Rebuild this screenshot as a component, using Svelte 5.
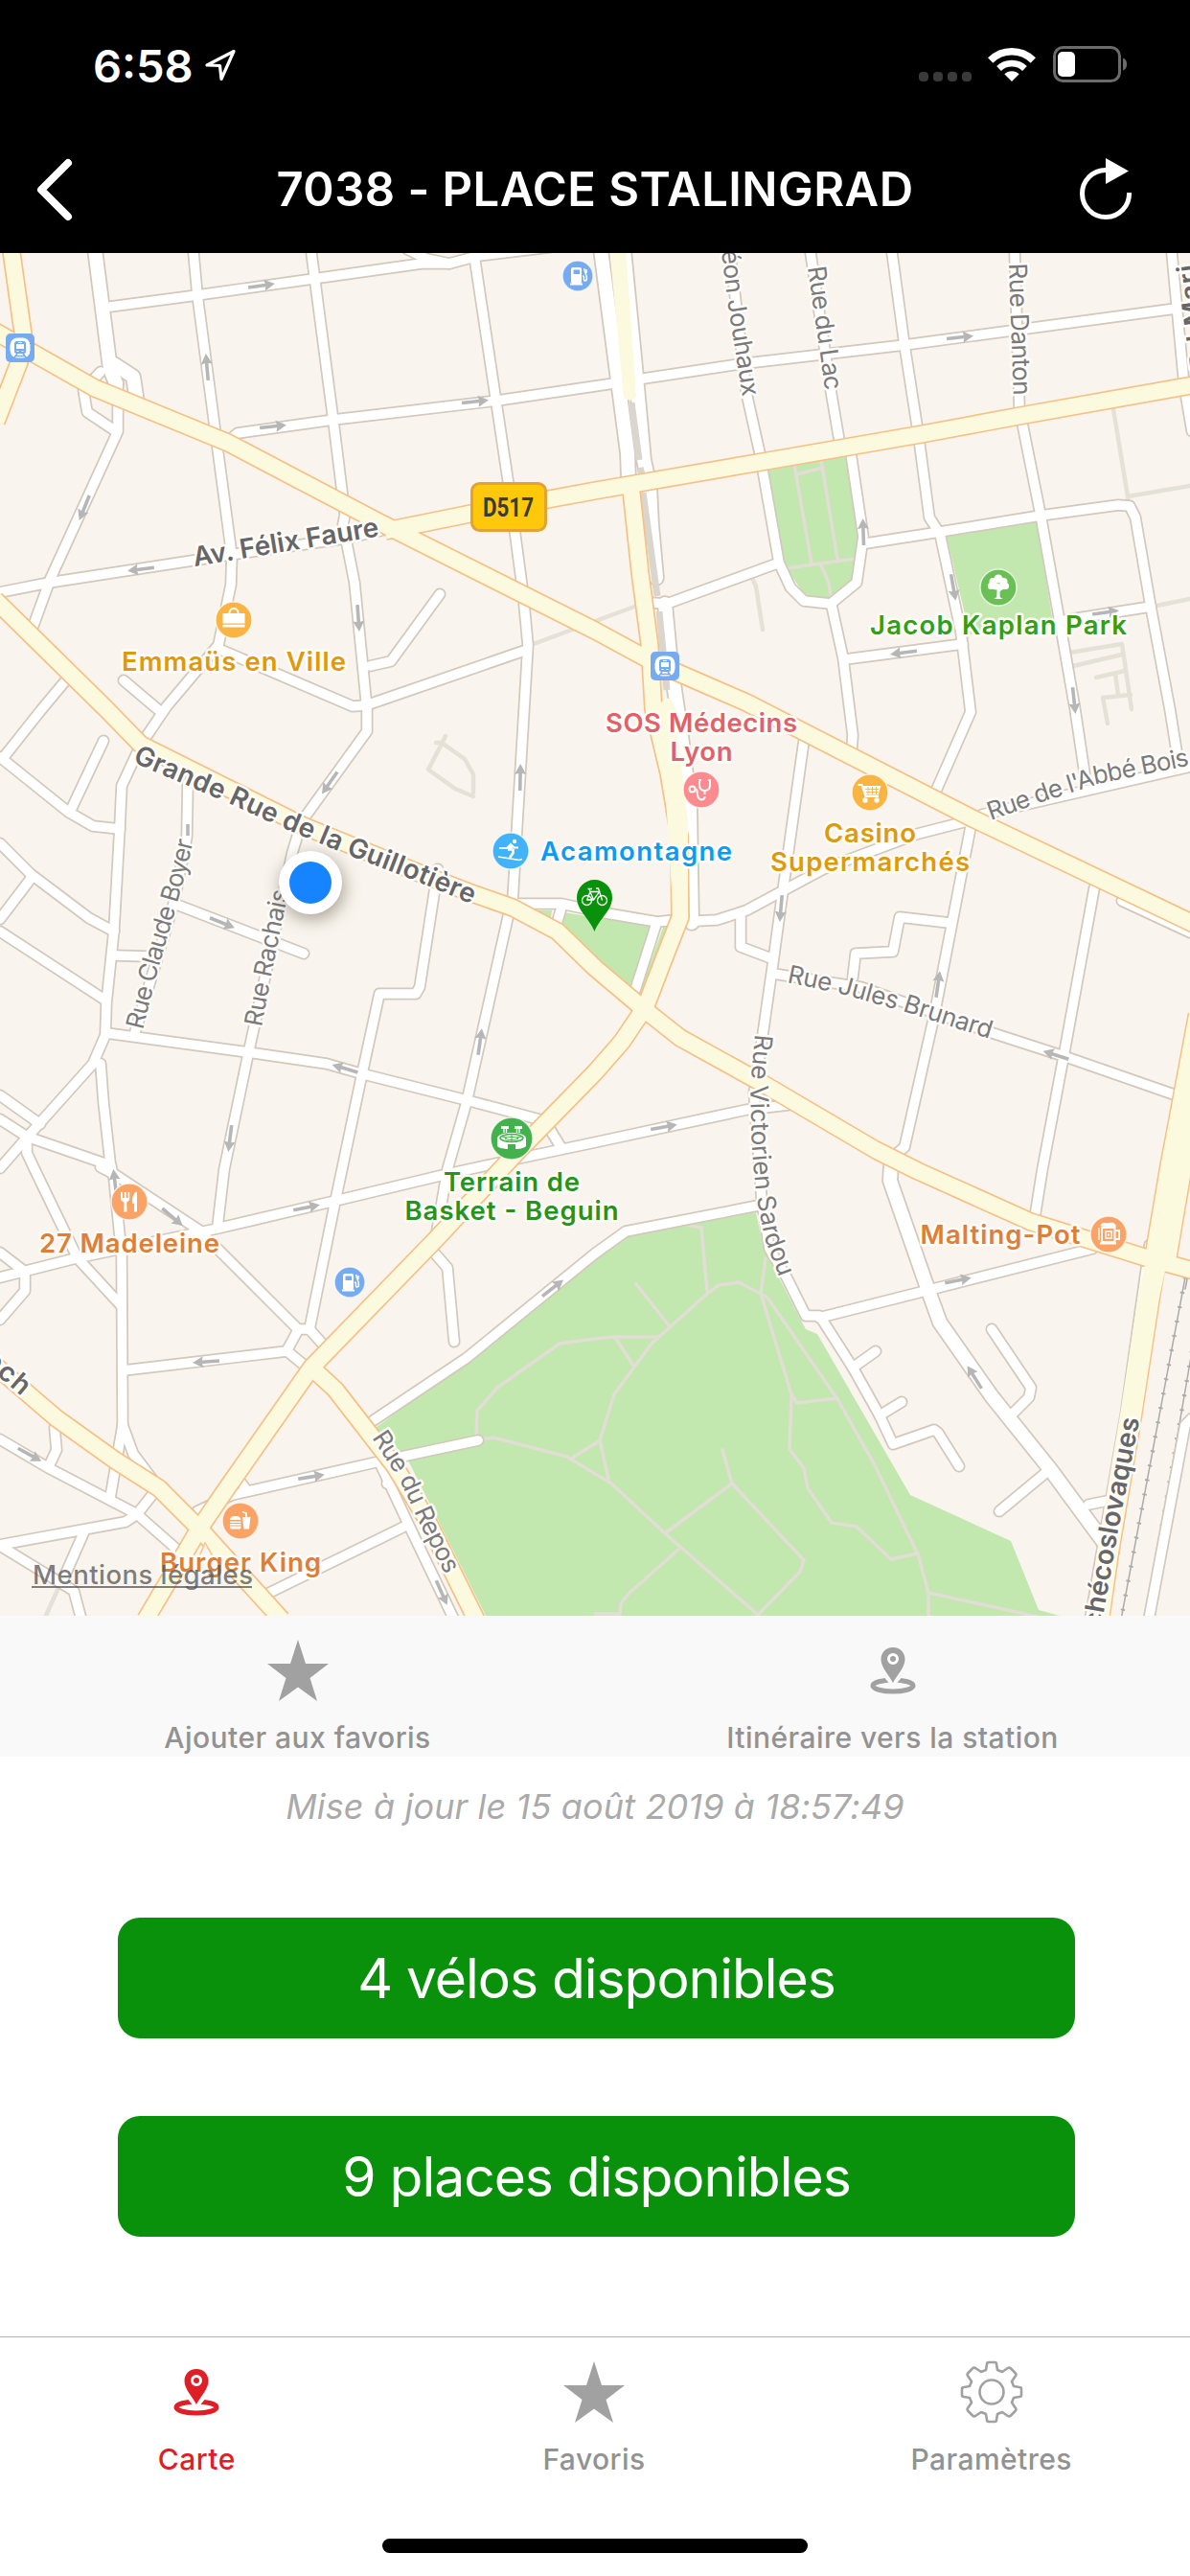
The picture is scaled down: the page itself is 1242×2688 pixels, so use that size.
<script>
  // Map geometry, in page pixels (the viewBox starts below the header).
  const parks = [
    '801,488 884,475 897,560 892,605 865,625 839,620 817,587',
    '988,560 1082,545 1099,650 1012,662',
    '588,952 680,967 657,1030 621,998 584,970',
    '556,950 576,950 574,965',
    '700,967 692,968 667,1037 672,1042',
    '392,1490 577,1350 653,1290 789,1265 797,1303 841,1387 853,1392 950,1560 1055,1608 1084,1680 1106,1686 507,1686 424,1520'
  ];

  const parkPaths = [
    '829,485 847,588', '857,480 874,583', '831,495 859,488', '821,593 892,583', '857,590 865,608 867,623',
    '497,1500 498,1472 519,1448 584,1402 621,1397 641,1395 686,1395',
    '501,1502 515,1500 592,1520 621,1538 637,1547 694,1600 791,1685 835,1640 839,1628 764,1548 754,1513',
    '764,1548 694,1600',
    '708,1617 657,1662 648,1673 647,1684 621,1684',
    '596,1522 626,1503 641,1455 680,1402 738,1350 750,1341 771,1338 794,1350 801,1354 874,1460 912,1527 958,1622 969,1662 969,1690',
    '635,1543 626,1503', '969,1662 1088,1688',
    '794,1350 826,1455 824,1512 839,1532 843,1553 868,1589 894,1593 930,1627 958,1621',
    '826,1455 832,1464 874,1459', '794,1350 799,1313', '738,1347 732,1281 716,1278',
    '698,1383 664,1340', '661,1425 643,1397'
  ];

  const footways = [
    '1162,427 1177,518 1242,507', '1177,518 1177,524', '1207,632 1242,625', '785,603 789,612 796,657',
    '554,673 665,632', '1116,681 1171,672 1181,740', '1120,695 1171,683', '1144,707 1174,700', '1164,703 1167,725',
    '1156,755 1151,728 1180,725', '465,768 459,780 447,803 475,823 494,831',
    '455,775 461,775 485,792 494,808 494,827', '61,1657 46,1690', '1000,672 1009,665'
  ];

  const minor = [
    '115,320 206,308 440,275 469,275 499,267 574,258', '425,260 445,270 469,275',
    '123,400 123,450 53,603 34,655', '105,388 87,407 91,430 121,450',
    '202,264 206,308 226,460 242,580 241,610 228,673 174,737 172,740 147,777 127,820 125,863 119,970 111,1047 110,1080 97,1110 28,1187 0,1219',
    '325,264 348,440 360,537 358,547 370,608 383,740 383,763 315,857 305,890 259,1100 234,1220 227,1280',
    '236,462 248,452 348,438 519,418 641,400', '665,396 771,380 944,360 1227,322',
    '495,267 531,507 546,620 551,673 547,740 535,940 531,953 487,1150 467,1220 455,1290',
    '0,618 51,608 246,578 360,562 405,552',
    '228,677 368,737 382,736 550,678', '459,620 408,690 386,695', '129,710 168,743',
    '67,712 42,742 4,790', '0,790 71,847 97,862 125,865', '108,773 75,843',
    '0,880 32,912 93,958 119,972', '32,917 0,959', '0,972 109,1043', '121,997 154,998',
    '196,817 195,873 182,940 141,1077', '182,943 317,995',
    '111,1078 259,1098 341,1110 376,1120 487,1148 570,1170',
    '457,907 438,1030 434,1037 396,1037 378,1120 357,1220 350,1253 323,1387',
    '0,1143 42,1173', '0,1168 28,1186 115,1216', '28,1190 28,1203 36,1220 81,1313 127,1363',
    '105,1110 108,1150 115,1213 119,1230 127,1310 128,1487 115,1563', '128,1487 139,1517 160,1545',
    '105,1218 119,1225 207,1283 311,1387 323,1387 338,1404',
    '0,1333 79,1313 222,1283 350,1253 467,1225 550,1207 621,1192 779,1158 823,1153', '570,1172 586,1198',
    '0,1307 26,1327 26,1347 0,1377', '129,1430 299,1410 311,1388', '301,1411 318,1425',
    '57,1490 59,1513 51,1530', '0,1502 51,1532 143,1580 194,1625',
    '0,1612 131,1588 143,1580 162,1556', '88,1598 65,1650', '0,1613 77,1660 85,1690',
    '206,1577 242,1560 396,1525 499,1503', '250,1545 258,1556',
    '390,1482 487,1417 621,1308 653,1285 791,1258', '398,1530 426,1590 473,1688', '424,1592 277,1664',
    '410,1530 404,1548', '453,1307 467,1323 474,1400',
    '762,264 779,410 793,473 813,587 825,613 839,627 867,630 894,608 901,560 888,473',
    '846,264 867,407 876,460', '931,264 944,360 958,450 970,540 981,557 1003,660 1013,743 977,825',
    '1059,264 1064,427 1086,537 1108,660 1122,740 1132,807', '1223,264 1236,403 1244,450',
    '904,567 981,555 1086,538 1167,527 1179,528 1185,540 1201,633 1221,740 1229,790',
    '1112,647 1201,633', '882,688 1005,672', '868,632 880,687 890,767 889,783',
    '680,629 696,630 811,588', '839,773 817,930 807,1003 795,1087 787,1140 795,1253 803,1303 821,1333 841,1373 855,1373',
    '704,962 748,960 779,950 859,907 958,870 1009,857', '1025,850 1242,800',
    '773,957 773,988 805,1000', '807,1016 898,1030 1033,1077 1110,1102 1225,1142',
    '890,1020 893,995 932,993 939,957 991,963', '1013,863 975,1060 944,1197 932,1207',
    '1142,927 1110,1103 1088,1220 1080,1270', '1171,940 1242,973',
    '541,943 586,943 633,953 686,962 704,960', '586,947 580,967', '684,967 663,1033',
    '855,1375 962,1348 1140,1303', '858,1377 890,1427 918,1477 932,1507 975,1492 979,1495 1001,1530',
    '890,1427 914,1410', '918,1477 941,1463', '1035,1387 1076,1448 1074,1458 1055,1477',
    '1090,1538 1043,1577', '1136,1570 1156,1566', '1244,1480 1237,1487 1199,1690'
  ];

  const wide = [
    '99,260 115,385 121,400', '119,380 139,393 143,420',
    '627,260 645,397 655,473 656,500', '651,260 664,393 672,480 678,507 680,547 685,603',
    '694,630 700,693 707,740 710,760 720,840 722,963',
    '930,1215 929,1232 969,1347 981,1380 1035,1457 1096,1533 1160,1620',
    '1202,1300 1177,1477 1140,1690'
  ];

  const major = [
    '-5,346 99,405 238,462 396,545 621,658 680,690 779,733 1017,855 1250,966',
    '11,256 24,348 20,378 -4,440', '402,554 491,536 621,512 795,482 962,453 1064,434 1250,401',
    '659,513 668,597 678,673 682,740 698,807 709,873 710,957 692,1003 674,1050 649,1087 621,1119 535,1207 455,1293 325,1427 234,1557 208,1595 152,1690',
    '-5,626 111,740 147,777 317,862 440,912 495,933 535,947 582,972 621,1010 672,1053 710,1083 795,1130 914,1200 958,1222 1076,1275 1195,1312 1250,1327',
    '-5,1425 59,1480 119,1523 166,1553 208,1595 294,1690',
    '325,1427 350,1450 412,1530 444,1583 497,1690'
  ];

  const arrows = [
    [273,298,-8],[216,383,-95],[285,445,-6],[496,419,-6],[88,530,112],[147,594,173],[374,645,86],
    [1002,352,-6],[901,555,-92],[995,613,80],[1154,639,-8],[943,681,173],[1121,731,84],
    [344,817,125],[543,811,-89],[232,963,22],[360,1115,197],[501,1087,-82],[240,1188,97],
    [815,948,95],[979,1027,-82],[1102,1101,198],[693,1176,-10],
    [120,1234,-97],[180,1270,40],[320,1260,-11],[215,1421,176],[577,1344,-38],[31,1518,29],
    [325,1541,-9],[461,1662,66],[1000,1336,-11],[1017,1437,-122]
  ];

  const streets = [
    { id: 'faure', d: 'M203,591 L398,559', text: 'Av. Félix Faure', len: 196, bold: true },
    { id: 'grande', d: 'M138,795 L238,838 L293,863 L360,891 L436,920 L496,945', text: 'Grande Rue de la Guillotière', len: 384, bold: true },
    { id: 'boyer', d: 'M149,1075 L164,1015 L190,925 L205,865', text: 'Rue Claude Boyer', len: 204 },
    { id: 'rachais', d: 'M273,1072 L283,1018 L302,925', text: 'Rue Rachais', len: 145 },
    { id: 'sardou', d: 'M788,1079 L783,1137 L785,1200 L789,1245 L798,1292 L818,1345', text: 'Rue Victorien Sardou', len: 258 },
    { id: 'jouhaux', d: 'M753,262 L760,320 L776,420', text: 'éon Jouhaux', len: 154 },
    { id: 'lac', d: 'M843,279 L862,412', text: 'Rue du Lac', len: 130 },
    { id: 'danton', d: 'M1053,275 L1058,418', text: 'Rue Danton', len: 138 },
    { id: 'bois', d: 'M1034,856 L1090,836 L1150,817 L1255,796', text: "Rue de l'Abbé Bois", len: 216 },
    { id: 'brunard', d: 'M821,1025 L874,1036 L942,1055 L1036,1085', text: 'Rue Jules Brunard', len: 220 },
    { id: 'repos', d: 'M388,1500 L418,1546 L438,1590 L471,1655', text: 'Rue du Repos', len: 163 },
    { id: 'foch', d: 'M-32,1410 L26,1460', text: 'och', len: 54, bold: true, start: 18 },
    { id: 'tch', d: 'M1149,1700 L1167,1597 L1191,1472', text: 'chécoslovaques', len: 223, bold: true },
    { id: 'marius', d: 'M1263,384 L1245,255', text: 'Bd Mari', len: 110, bold: true }
  ];

  const labels = [
    { x: 244, y: 700, len: 234, text: 'Emmaüs en Ville', c: 'gold' },
    { x: 1042, y: 662, len: 268, text: 'Jacob Kaplan Park', c: 'park' },
    { x: 732, y: 764, len: 200, text: 'SOS Médecins', c: 'rose' },
    { x: 732, y: 794, len: 65, text: 'Lyon', c: 'rose' },
    { x: 908, y: 879, len: 96, text: 'Casino', c: 'gold' },
    { x: 908, y: 909, len: 208, text: 'Supermarchés', c: 'gold' },
    { x: 664, y: 898, len: 200, text: 'Acamontagne', c: 'sky' },
    { x: 534, y: 1243, len: 142, text: 'Terrain de', c: 'sport' },
    { x: 534, y: 1273, len: 223, text: 'Basket - Beguin', c: 'sport' },
    { x: 135, y: 1307, len: 188, text: '27 Madeleine', c: 'food' },
    { x: 1044, y: 1298, len: 167, text: 'Malting-Pot', c: 'food' },
    { x: 251, y: 1640, len: 168, text: 'Burger King', c: 'food' }
  ];

  const halos = [
    [244,647,19,'#fab441'],[1042,613,19,'#6abf55'],[732,824,19,'#fc8b90'],[908,827,19,'#fab441'],
    [533,888,19,'#42b3f8'],[534,1188,22,'#44b24c'],[135,1254,19,'#fba364'],[1157,1288,19,'#fba364'],
    [251,1587,19,'#fba364'],[603,288,16,'#76abf1'],[365,1338,16,'#76abf1']
  ];
</script>

{#snippet star()}
  <svg class="icon" viewBox="0 0 64 64"><path d="M32 0L40 25H64L44.500 40L52 64L32 49.500L12 64L19.500 40L0 25H24Z" fill="currentColor" /></svg>
{/snippet}

{#snippet place()}
  <svg class="icon" viewBox="0 0 64 64">
    <ellipse cx="32" cy="48" rx="21" ry="6" fill="none" stroke="currentColor" stroke-width="5" />
    <path class="cut" d="M21 37H43L34 48H30Z" />
    <path d="M32 8C24 8 19.500 14 19.500 20.500C19.500 29 28 37 32 45C36 37 44.500 29 44.500 20.500C44.500 14 40 8 32 8Z" fill="currentColor" />
    <circle cx="32" cy="20" r="4.500" fill="currentColor" stroke="#fff" stroke-width="3" />
  </svg>
{/snippet}

{#snippet train(x, y)}
  <g transform="translate({x} {y})">
    <rect x="-15" y="-15" width="30" height="30" rx="5" fill="#76abf1" />
    <rect x="-10.500" y="-10.500" width="21" height="21" rx="8" fill="#fff" />
    <rect x="-6" y="-7" width="12" height="13" rx="2.500" fill="#76abf1" />
    <rect x="-4" y="-4" width="8" height="5" fill="#fff" />
    <path d="M-2 -5.500H2M-3.500 3.500H-1.500M1.500 3.500H3.500" stroke="#fff" stroke-width="1.200" />
    <path d="M-3 6L-6 10M3 6L6 10M-4 8.500H4" stroke="#76abf1" stroke-width="1.500" />
  </g>
{/snippet}

{#snippet fuel(x, y)}
  <g transform="translate({x} {y})">
    <rect x="-7" y="-9" width="11" height="17" rx="2" fill="#fff" />
    <rect x="-4.500" y="-6.500" width="6.500" height="4.500" fill="#76abf1" />
    <path d="M-8 8.500H5" stroke="#fff" stroke-width="2" />
    <path d="M5 0C8 0 5 5 7.500 5C10 5 10 1 8 -3L6.500 -8M9 -7V-3" fill="none" stroke="#fff" stroke-width="1.500" />
  </g>
{/snippet}

<div class="screen">
  <header>
    <div class="status">
      <div class="clock">
        <span>6:58</span>
        <svg width="34" height="34" viewBox="0 0 34 34"><path d="M31 2.500L3 17L16.500 17.500L18 31.500Z" fill="none" stroke="#fff" stroke-width="3.200" stroke-linejoin="round" /></svg>
      </div>
      <div class="signals">
        <div class="dots"><i></i><i></i><i></i><i></i></div>
        <svg class="wifi" width="50" height="37" viewBox="0 0 50 37" fill="none" stroke="#fff">
          <path d="M2.700 14A31.500 31.500 0 0 1 47.300 14" stroke-width="7.500" />
          <path d="M11.500 22.500A19.500 19.500 0 0 1 38.500 22.500" stroke-width="6.800" />
          <path d="M25 36L17.300 28.300A11 11 0 0 1 32.700 28.300Z" fill="#fff" stroke="none" />
        </svg>
        <svg class="battery" width="78" height="38" viewBox="0 0 78 38">
          <rect x="1.500" y="1.500" width="68" height="35" rx="9" fill="none" stroke="#6b6b6b" stroke-width="3" />
          <rect x="5" y="6" width="18" height="26" rx="5" fill="#fff" />
          <path d="M73 12.500C78.500 14.500 78.500 23.500 73 25.500Z" fill="#6b6b6b" />
        </svg>
      </div>
    </div>
    <div class="nav">
      <svg class="back" width="40" height="66" viewBox="0 0 40 66"><path d="M34 5L6 33L34 61" fill="none" stroke="#fff" stroke-width="8" stroke-linecap="round" stroke-linejoin="round" /></svg>
      <h1>7038 - PLACE STALINGRAD</h1>
      <svg class="refresh" width="56" height="66" viewBox="0 0 56 66">
        <path d="M51.500 36A24.500 24.500 0 1 1 27 12.500" fill="none" stroke="#fff" stroke-width="5" />
        <path d="M27 0L51 13.500L27 27Z" fill="#fff" />
      </svg>
    </div>
  </header>

  <svg class="map" viewBox="0 264 1242 1422">
    <rect x="0" y="264" width="1242" height="1422" fill="#f9f4ed" />
    {#each parks as p}<polygon points={p} fill="#c2e8b0" />{/each}
    <g class="line park-path">{#each parkPaths as p}<polyline points={p} />{/each}</g>
    <g class="line footway">{#each footways as p}<polyline points={p} />{/each}</g>

    <g class="line rail">
      <polyline points="1237,1333 1170,1690" />
      <polyline points="1244,1310 1237,1345" />
      <polyline points="1244,1410 1196,1690" />
    </g>
    <g class="line ties">
      <polyline points="1237,1333 1170,1690" />
      <polyline points="1244,1410 1196,1690" />
    </g>

    <g class="line casing">{#each minor as p}<polyline points={p} />{/each}</g>
    <g class="line wide-casing">{#each wide as p}<polyline points={p} />{/each}</g>
    <g class="line fill">{#each minor as p}<polyline points={p} />{/each}</g>
    <g class="line wide-fill">{#each wide as p}<polyline points={p} />{/each}</g>

    <g class="line tram">
      <polyline points="659,420 667,480" />
      <polyline points="668,488 670,495" />
      <polyline points="671,514 686,622" />
      <polyline points="688,638 696,720" />
    </g>

    <g class="line major-casing">{#each major as p}<polyline points={p} />{/each}</g>
    <polyline class="line boulevard-casing" points="1257,1060 1227,1220 1210,1320" />
    <polyline class="line avenue-casing" points="1210,1310 1203,1353 1184,1477 1160,1620 1150,1690" />
    <g class="line major-fill">{#each major as p}<polyline points={p} />{/each}</g>
    <polyline class="line boulevard-fill" points="1257,1060 1227,1220 1210,1320" />
    <polyline class="line avenue-fill" points="1206,1320 1199,1353 1180,1477 1156,1620 1146,1690" />
    <path class="yellow" d="M636 258L653 258L664 414Q659 421 651 415Z" />
    <path class="yellow" d="M689 735Q696 722 704 735L718 858L718 960L703 960Z" />
    <path d="M214 1610L208 1624L224 1627Z" fill="#f9f4ed" stroke="#f8c58c" stroke-width="1.500" />

    {#each arrows as [x, y, a]}
      <path transform="translate({x} {y}) rotate({a})" d="M-14 -1.800H4L3 -6L14 0L3 6L4 1.800H-14Z" fill="#b6b6b6" />
    {/each}
    <path d="M196 860V872" stroke="#b6b6b6" stroke-width="3.500" />

    <defs>{#each streets as s}<path id={s.id} d={s.d} />{/each}</defs>
    {#each streets as s}
      <text class="street" class:bold={s.bold} textLength={s.len}><textPath href="#{s.id}" startOffset={s.start ?? 0} textLength={s.len}>{s.text}</textPath></text>
    {/each}

    {#each halos as [x, y, r, c]}
      <circle cx={x} cy={y} {r} fill={c} stroke="#fff" stroke-opacity="0.700" stroke-width="1.500" />
    {/each}
    {@render train(21, 363)}
    {@render train(694, 695)}
    {@render fuel(603, 288)}
    {@render fuel(365, 1338)}

    <g transform="translate(244 647)">
      <path d="M-11.500 -7H11.500V3.500H-11.500ZM-11.500 4.800H11.500V7.500H-11.500Z" fill="#fff" />
      <path d="M-4.500 -6V-8A4.500 4 0 0 1 4.500 -8V-6" fill="none" stroke="#fff" stroke-width="2" />
    </g>
    <g transform="translate(1042 613)" fill="#fff">
      <circle cx="0" cy="-9" r="4.500" /><circle cx="-5.500" cy="-6" r="4" /><circle cx="5.500" cy="-6" r="4" />
      <circle cx="-7.500" cy="-1.500" r="3.600" /><circle cx="7.500" cy="-1.500" r="3.600" /><circle cx="-2.500" cy="-1" r="3.600" /><circle cx="3" cy="-1" r="3.600" />
      <path d="M-1.400 0H1.400L1.700 10L4.500 12H-4.500L-1.700 10Z" />
      <path d="M0 5L5 0" stroke="#fff" stroke-width="1.500" />
    </g>
    <g transform="translate(732 824)" fill="none" stroke="#fff" stroke-width="2">
      <path d="M0 -10H-2V-5C-2 -1 0 1 3.500 1C7 1 9 -1 9 -5V-10H7M3.500 1V5" />
      <circle cx="-9.500" cy="-.500" r="3" />
      <path d="M-6.500 -.500C-2 -1 -7 10 0 10.500C4 10.500 3.500 7 3.500 7" />
    </g>
    <g transform="translate(908 827)" fill="none" stroke="#fff" stroke-width="2">
      <path d="M-12.500 -8H-8.500L-4.500 4H9" />
      <path d="M-7.500 -6H10L8 1.500H-5Z" fill="#fff" />
      <path d="M-5 -3.500H9M-4 -.500H8.500M-2 -6V2M2.500 -6V2M6.500 -6V2" stroke="#fab441" stroke-width="0.900" />
      <circle cx="-5" cy="8" r="1.700" fill="#fff" /><circle cx="7" cy="8" r="1.700" fill="#fff" />
    </g>
    <g transform="translate(533 888)" fill="none" stroke="#fff" stroke-width="2">
      <circle cx="4" cy="-10" r="2.200" fill="#fff" stroke="none" />
      <path d="M-12 -3H2" stroke-width="1.700" />
      <path d="M8 -3.500H4L1 -6" stroke-width="1.800" />
      <path d="M1.500 -7L-3 -2.500" stroke-width="4" />
      <path d="M-3 -1.500H2.500V2L-1 7" stroke-width="2.600" />
      <path d="M-13 6L9 9.500L12 8.500" stroke-width="1.500" />
    </g>
    <g transform="translate(534 1188)">
      <path d="M-11 -13H-3V-10H-11ZM3 -13H11V-10H3Z" fill="#fff" />
      <path d="M-8 -10V-6M-5.500 -10V-6M5.500 -10V-6M8 -10V-6" stroke="#fff" stroke-width="1.300" />
      <path d="M-15 0C-15 -8 15 -8 15 0V8C12 11 5 11 4 11V6H-4V11C-5 11 -12 11 -15 8Z" fill="#fff" />
      <ellipse cy="-.500" rx="12" ry="4" fill="none" stroke="#44b24c" stroke-width="1.500" />
      <path d="M-7 0C-5 -2 5 -2 7 0C5 2 -5 2 -7 0M0 -4V3M-10 -2L-5 -1M10 -2L5 -1" fill="none" stroke="#44b24c" stroke-width="1" />
    </g>
    <g transform="translate(135 1254)" fill="#fff">
      <path d="M-9 -10H-7.200V-4H-5.200V-10H-3.400V-4H-1.400V-10H0.200V-3C0.200 -.500 -2.800 0 -2.800 1L-2.500 10.500H-6L-5.700 1C-5.700 0 -9 -.500 -9 -3Z" />
      <path d="M8 -10.500V10.500H5V2H3.500C2 -4 4.500 -9.500 8 -10.500Z" />
    </g>
    <g transform="translate(1157 1288)" fill="none" stroke="#fff">
      <path d="M-7 -7H6.500V8H-7Z" stroke-width="2" /><path d="M7 -4H11V5H7" stroke-width="2" />
      <path d="M-9 9.500H8" stroke-width="2" /><path d="M-8 -9C-8 -12 -2 -12 -1 -11C4 -13 8 -11 7 -8Z" fill="#fff" />
      <path d="M-3 -3H3V4H-3ZM0 -1V2" stroke-width="1.500" /><path d="M-10 -7V6" stroke-width="1.300" />
    </g>
    <g transform="translate(251 1587)" fill="#fff">
      <path d="M-11 -1C-11 -6.500 .500 -6.500 .500 -1ZM-11 .500H.500V2H-11ZM-11 3H.500V4.500H-11ZM-11 5.500H.500C.500 9 -1 8.500 -2 8.500H-9C-10 8.500 -11 8.500 -11 5.500Z" />
      <path d="M2 -4H10.500L9 8.500H3.500Z" /><path d="M6 -4V-8L2 -9.500" fill="none" stroke="#fff" stroke-width="1.700" />
    </g>

    <rect x="492.500" y="504.500" width="77" height="49" rx="8" fill="#ffc80b" stroke="#e3a234" stroke-width="3" />
    <text class="shield" x="530.500" y="539" textLength="53" lengthAdjust="spacingAndGlyphs">D517</text>

    {#each labels as l}
      <text class="poi {l.c}" x={l.x} y={l.y} textLength={l.len}>{l.text}</text>
    {/each}

    <circle class="me" cx="324" cy="921" r="33" fill="#fff" />
    <circle cx="324" cy="921" r="22" fill="#1683ff" />

    <path d="M620.500 972C615 958 602 950 602 936.500A18.500 18.500 0 0 1 639 936.500C639 950 626 958 620.500 972Z" fill="#09910b" />
    <g fill="none" stroke="#fff" stroke-width="1.300">
      <circle cx="612.500" cy="939.500" r="5" /><circle cx="628.500" cy="939.500" r="5" />
      <path d="M612.500 939.500L616 930.500H625.500L619.500 939H612.500M616 930.500L619.500 939M613.500 927.500H618M616 930.500L615 927.500M628.500 939.500L624.500 927H622" />
    </g>
    <text class="legal" x="34" y="1653" textLength="230">Mentions légales</text>
    <path d="M33 1656H263" stroke="#555" stroke-opacity="0.750" stroke-width="2" />
  </svg>

  <div class="actions">
    <div class="item">{@render star()}<span>Ajouter aux favoris</span></div>
    <div class="item">{@render place()}<span>Itinéraire vers la station</span></div>
  </div>

  <main>
    <p>Mise à jour le 15 août 2019 à 18:57:49</p>
    <div class="pill">4 vélos disponibles</div>
    <div class="pill">9 places disponibles</div>
  </main>

  <footer>
    <div class="tabs">
      <div class="item active">{@render place()}<span>Carte</span></div>
      <div class="item">{@render star()}<span>Favoris</span></div>
      <div class="item">
        <svg class="icon" viewBox="-32 -32 64 64" fill="none" stroke="currentColor" stroke-width="2.600" stroke-linejoin="round">
          <path d="M-5 -29Q-5 -31 -3 -31H3Q5 -31 5 -29L6 -23L11 -21L17 -25Q18.500 -26 20 -24.500L24.500 -20Q26 -18.500 25 -17L21 -11L23 -6L29 -5Q31 -5 31 -3V3Q31 5 29 5L23 6L21 11L25 17Q26 18.500 24.500 20L20 24.500Q18.500 26 17 25L11 21L6 23L5 29Q5 31 3 31H-3Q-5 31 -5 29L-6 23L-11 21L-17 25Q-18.500 26 -20 24.500L-24.500 20Q-26 18.500 -25 17L-21 11L-23 6L-29 5Q-31 5 -31 3V-3Q-31 -5 -29 -5L-23 -6L-21 -11L-25 -17Q-26 -18.500 -24.500 -20L-20 -24.500Q-18.500 -26 -17 -25L-11 -21L-6 -23Z" />
          <circle r="12.500" />
        </svg>
        <span>Paramètres</span>
      </div>
    </div>
    <div class="home"></div>
  </footer>
</div>

<style>
  :global(body) { margin: 0; background: #fff; }
  .screen { width: 1242px; height: 2688px; display: flex; flex-direction: column; overflow: hidden; background: #fff; font-family: Inter, "Liberation Sans", sans-serif; }
  header { height: 264px; flex: none; background: #000; color: #fff; box-sizing: border-box; }
  .status { height: 132px; display: flex; justify-content: space-between; box-sizing: border-box; padding: 0 65px 0 97px; }
  .clock { display: flex; align-items: center; gap: 11px; height: 136px; font-size: 47px; font-weight: 600; letter-spacing: 0; }
  .signals { display: flex; align-items: flex-end; height: 86px; }
  .dots { display: flex; gap: 5px; margin-bottom: 1px; }
  .dots i { width: 10px; height: 10px; border-radius: 4px; background: #3a3a3a; }
  .wifi { margin-left: 17px; }
  .battery { margin-left: 18px; }
  .nav { height: 132px; display: flex; align-items: center; padding: 0 59px 0 37px; }
  .nav svg { flex: none; }
  .nav h1 { flex: 1; margin: 0 0 0 38px; font-size: 49px; line-height: 60px; font-weight: 600; letter-spacing: 0.450px; text-align: center; white-space: nowrap; }
  .map { display: block; width: 1242px; height: 1422px; flex: none; }

  .line { fill: none; stroke-linejoin: round; stroke-linecap: round; }
  .park-path { stroke: #e2ddd5; stroke-width: 3.500; }
  .footway { stroke: #e4e2d6; stroke-width: 4.500; }
  .rail { stroke: #ababab; stroke-width: 1.500; }
  .ties { stroke: #ababab; stroke-width: 4.500; stroke-dasharray: 1.800 13.500; stroke-linecap: butt; }
  .casing { stroke: #d2c8bb; stroke-width: 13; }
  .fill { stroke: #fff; stroke-width: 9.600; }
  .wide-casing { stroke: #d2c8bb; stroke-width: 17.500; }
  .wide-fill { stroke: #fff; stroke-width: 14; }
  .tram { stroke: #dad5cd; stroke-width: 7; stroke-linecap: butt; }
  .major-casing { stroke: #f7c084; stroke-width: 20; stroke-linecap: butt; }
  .major-fill { stroke: #fcfade; stroke-width: 16.600; stroke-linecap: butt; }
  .boulevard-casing { stroke: #f7c084; stroke-width: 35; stroke-linecap: butt; }
  .boulevard-fill { stroke: #fcfade; stroke-width: 32; stroke-linecap: butt; }
  .avenue-casing { stroke: #f7c084; stroke-width: 17; stroke-linecap: butt; }
  .avenue-fill { stroke: #fcfade; stroke-width: 22; stroke-linecap: butt; }
  .yellow { fill: #fcfade; }
  .street, .poi { paint-order: stroke; stroke: #fffdf9; stroke-width: 5px; stroke-linejoin: round; }
  .street { font-size: 26px; font-weight: 400; fill: #7a7a7c; }
  .street.bold { font-size: 28px; font-weight: 600; fill: #666668; }
  .poi { font-size: 27.500px; font-weight: 600; text-anchor: middle; }
  .gold { fill: #de990c; }
  .park { fill: #329f14; }
  .rose { fill: #e06169; }
  .sky { fill: #0c9bf4; }
  .sport { fill: #23941e; }
  .food { fill: #df7f36; }
  .shield { font: 700 28px Roboto, "Liberation Sans", sans-serif; fill: #3a3a36; text-anchor: middle; }
  .me { filter: drop-shadow(2px 5px 9px rgba(60, 50, 30, 0.45)); }
  .legal { font-size: 27.500px; font-weight: 500; fill: #555; fill-opacity: 0.750; }

  .actions { height: 147px; flex: none; display: flex; background: #f9f9f9; color: #a1a1a1; }
  .item { flex: 1; display: flex; flex-direction: column; align-items: center; padding-top: 25px; }
  .icon { width: 64px; height: 64px; flex: none; overflow: visible; }
  .item span { margin-top: 20px; font-size: 30px; line-height: 36px; font-weight: 500; color: #929292; white-space: nowrap; letter-spacing: 0.450px; }
  .cut { fill: #fff; }
  .actions .cut { fill: #f9f9f9; }
  main { flex: 1; display: flex; flex-direction: column; align-items: center; }
  main p { margin: 29px 0 93px; font-size: 36px; line-height: 46px; font-style: italic; color: #aaa; white-space: nowrap; letter-spacing: 0.150px; }
  .pill { width: 999px; height: 126px; margin: 0 0 81px 3px; border-radius: 23px; background: #09910b; color: #fff; font-size: 57px; line-height: 127px; text-align: center; letter-spacing: -1.050px; }
  footer { height: 250px; flex: none; box-sizing: border-box; border-top: 1px solid #b2b2b2; padding-bottom: 24px; display: flex; flex-direction: column; justify-content: space-between; align-items: center; }
  .tabs { width: 100%; display: flex; color: #a1a1a1; }
  .tabs .item:first-child { margin-left: -2px; }
  .active, .item.active span { color: #e01e26; }
  .home { width: 444px; height: 15px; border-radius: 8px; background: #000; }
</style>
